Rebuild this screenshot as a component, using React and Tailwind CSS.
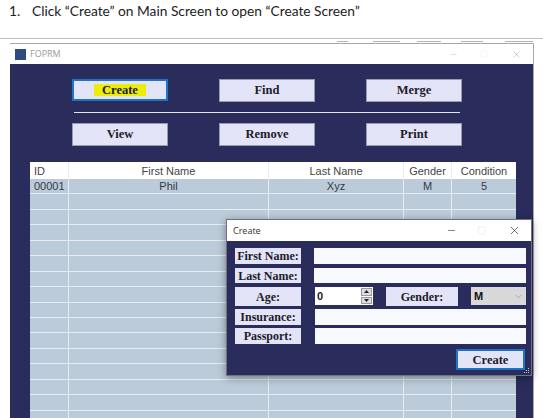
import React from 'react';
import { Minus, X, Square, ChevronDown } from 'lucide-react';

const serif = "font-['Liberation_Serif',serif] font-bold";
const rows = Array.from({ length: 15 });

const TopButton = ({ label, focus }) => (
  <button
    className={`${serif} w-[96px] bg-[#e4e4f8] text-[12.5px] text-[#1c1c28] flex items-center justify-center ${
      focus ? 'h-[22px] border-2 border-[#1b74c4]' : 'h-[23px] border border-[#9a9aa8]'
    }`}
  >
    {focus ? <span className="bg-[#ecec0c] px-[8px] leading-[12px]">{label}</span> : label}
  </button>
);

const Label = ({ children, className }) => (
  <div className={`${serif} w-[66px] bg-[#e4e4f8] text-[12px] text-[#1c1c28] flex items-center justify-center whitespace-nowrap ${className}`}>
    {children}
  </div>
);

const Cell = ({ w, children, className = '' }) => (
  <div className={`${w} shrink-0 text-center border-r border-[#e6edf4] last:border-r-0 ${className}`}>{children}</div>
);

const Row = ({ id, first, last, gender, cond }) => (
  <div className="flex h-[15.45px] bg-[#bccbd9] border-b border-[#e6edf4] text-[11px] leading-[14px] text-[#333a44]">
    <Cell w="w-[39px]" className="text-left pl-[4px]">{id}</Cell>
    <Cell w="w-[200px]">{first}</Cell>
    <Cell w="w-[135px]">{last}</Cell>
    <Cell w="w-[48px]">{gender}</Cell>
    <Cell w="w-[64px]">{cond}</Cell>
  </div>
);

const CreateDialog = () => (
  <div className="absolute left-[226px] top-[219px] w-[306px] h-[157px] bg-[#2a2d5c] border border-[#6f7380] shadow-[0_2px_8px_rgba(0,0,0,0.4)] flex flex-col">
    <div className="h-[21px] bg-white flex items-center pl-[6px] text-[9px] text-[#333] font-['Open_Sans',sans-serif] shrink-0">
      <span className="flex-1">Create</span>
      <Minus size={11} strokeWidth={1.2} className="text-[#222] mr-[20px]" />
      <Square size={9} strokeWidth={0.8} className="text-[#cfcfcf] mr-[22px]" />
      <X size={13} strokeWidth={1.2} className="text-[#222] mr-[10px]" />
    </div>
    <div className="flex flex-col pl-[8px] pt-[7px] relative flex-1">
      <div className="flex h-[16px] mb-[4px]">
        <Label className="h-[16px]">First Name:</Label>
        <div className="ml-[13px] w-[212px] bg-[#f8f8ff]" />
      </div>
      <div className="flex h-[15px] mb-[4px]">
        <Label className="h-[15px]">Last Name:</Label>
        <div className="ml-[13px] w-[212px] bg-[#f8f8ff]" />
      </div>
      <div className="flex h-[19px] mb-[3px]">
        <Label className="h-[19px]">Age:</Label>
        <div className="ml-[14px] w-[58px] h-[18px] bg-white flex items-center justify-between font-['Liberation_Sans',sans-serif] font-bold text-[11px] text-[#222] pl-[2px] pr-[1px]">
          0
          <div className="w-[11px] h-[16px] flex flex-col gap-[1px]">
            <div className="flex-1 bg-[#dcdce4] border border-[#999] flex items-center justify-center">
              <svg width="5" height="3" viewBox="0 0 5 3"><path d="M2.5 0L5 3H0z" fill="#222" /></svg>
            </div>
            <div className="flex-1 bg-[#dcdce4] border border-[#999] flex items-center justify-center">
              <svg width="5" height="3" viewBox="0 0 5 3"><path d="M0 0h5L2.5 3z" fill="#222" /></svg>
            </div>
          </div>
        </div>
        <Label className="ml-[13px] w-[72px] h-[19px]">Gender:</Label>
        <div className="ml-[13px] w-[55px] h-[18px] bg-[#d8d8d8] flex items-center justify-between pl-[3px] pr-[2px] font-['Liberation_Sans',sans-serif] font-bold text-[11px] text-[#111]">
          <span className="text-[#111]">M</span>
          <ChevronDown size={11} strokeWidth={1} className="text-[#777]" />
        </div>
      </div>
      <div className="flex h-[16px] mb-[3px]">
        <Label className="h-[16px]">Insurance:</Label>
        <div className="ml-[14px] w-[211px] bg-[#f8f8ff]" />
      </div>
      <div className="flex h-[16px] mb-[5px]">
        <Label className="h-[16px]">Passport:</Label>
        <div className="ml-[14px] w-[211px] bg-[#f8f8ff]" />
      </div>
      <div className="flex justify-end pr-[6px]">
        <button className={`${serif} w-[69px] h-[21px] bg-[#e4e4f8] border-2 border-[#1b74c4] text-[12.5px] text-[#1c1c28]`}>Create</button>
      </div>
      <svg className="absolute right-[1px] bottom-[1px]" width="6" height="6" viewBox="0 0 6 6">
        <path d="M4 0h1v1H4zM2 2h1v1H2zM4 2h1v1H4zM0 4h1v1H0zM2 4h1v1H2zM4 4h1v1H4z" fill="#c8c8d4" />
      </svg>
    </div>
  </div>
);

export default function App() {
  return (
    <div className="relative w-[543px] h-[418px] bg-white overflow-hidden">
      <div className="h-[39px] pt-[1px] flex items-start text-[13.75px] leading-[20px] text-[#222] font-['Lato',sans-serif] border-b border-[#bdbdbd]">
        <span className="ml-[9px] w-[23px]">1.</span>
        <span>Click “Create” on Main Screen to open “Create Screen”</span>
      </div>

      {/* smudges left by the ribbon tabs behind the window */}
      <div className="h-[4px] pl-[337px] flex items-end pb-[1px]">
        <div className="h-[1px] w-[11px] bg-[#b4b4b4] mr-[25px]" />
        <div className="h-[1px] w-[27px] bg-[#b4b4b4] mr-[17px]" />
        <div className="h-[1px] w-[24px] bg-[#b4b4b4] mr-[20px]" />
        <div className="h-[1px] w-[22px] bg-[#b4b4b4] mr-[22px]" />
        <div className="h-[1px] w-[28px] bg-[#b4b4b4]" />
      </div>

      <div className="ml-[10px] w-[524px] h-[375px] border-t border-r border-[#a8a8a8] flex flex-col">
        <div className="h-[20px] bg-white flex items-center shrink-0 pl-[5px] text-[9px] text-[#9a9a9a] font-['Open_Sans',sans-serif]">
          <div className="w-[11px] h-[11px] bg-[#2f4a80] mr-[4px]" />
          <span className="flex-1">FOPRM</span>
          <Minus size={9} strokeWidth={1} className="text-[#aaa] mr-[22px]" />
          <Square size={8} strokeWidth={0.6} className="text-[#ddd] mr-[23px]" />
          <X size={11} strokeWidth={1} className="text-[#999] mr-[11px]" />
        </div>
        <div className="flex-1 bg-[#2a2d5c] flex flex-col pl-[62px] pt-[15px]">
          <div className="flex w-[390px] justify-between">
            <TopButton label="Create" focus />
            <TopButton label="Find" />
            <TopButton label="Merge" />
          </div>
          <div className="h-[1px] w-[386px] ml-[2px] bg-[#e4e4f8] mt-[10px] mb-[10px]" />
          <div className="flex w-[390px] justify-between">
            <TopButton label="View" />
            <TopButton label="Remove" />
            <TopButton label="Print" />
          </div>
          <div className="-ml-[42px] mt-[16px] w-[486px] font-['Liberation_Sans',sans-serif]">
            <div className="flex h-[17px] bg-white text-[11px] leading-[18px] text-[#444]">
              <Cell w="w-[39px]" className="text-left pl-[4px]">ID</Cell>
              <Cell w="w-[200px]">First Name</Cell>
              <Cell w="w-[135px]">Last Name</Cell>
              <Cell w="w-[48px]">Gender</Cell>
              <Cell w="w-[64px]">Condition</Cell>
            </div>
            <Row id="00001" first="Phil" last="Xyz" gender="M" cond="5" />
            {rows.map((_, i) => (
              <Row key={i} />
            ))}
          </div>
        </div>
      </div>

      <CreateDialog />
    </div>
  );
}
